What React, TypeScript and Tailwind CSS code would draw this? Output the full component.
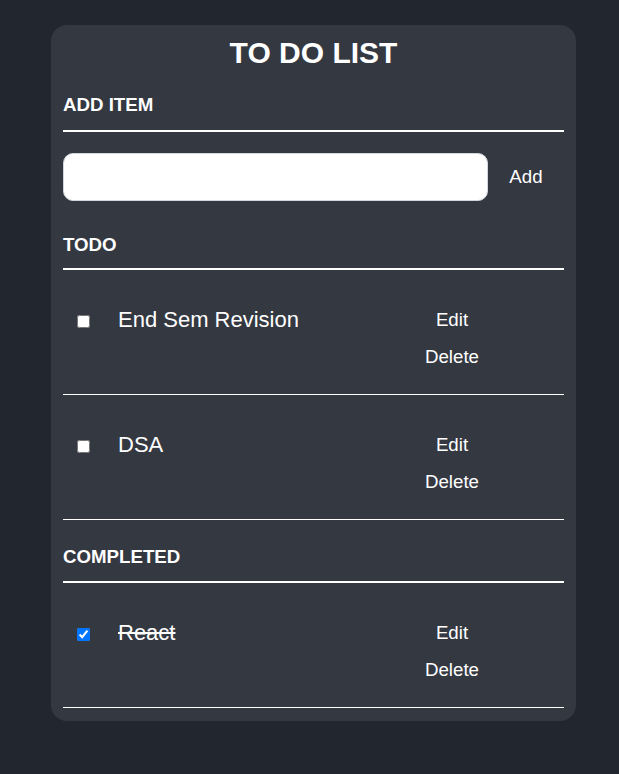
import React from "react";

interface TodoItemProps {
    text: string;
    done?: boolean;
}

function TodoItem({ text, done }: TodoItemProps) {
    return (
        <li className="flex items-start border-b border-white pt-[31px] pb-[19px]">
            <div className="flex flex-1 items-center h-[37px]">
                <input
                    type="checkbox"
                    defaultChecked={done}
                    className="ml-[14px] mt-[3px] h-[13px] w-[13px] accent-[#0075ff]"
                />
                <label className={"ml-[28px] text-[22px] leading-[37px] " + (done ? "line-through" : "")}>
                    {text}
                </label>
            </div>
            <div className="flex w-[100px] flex-col items-center mr-[62px]">
                <button className="h-[37px] text-[18.7px] leading-[37px]">Edit</button>
                <button className="h-[37px] text-[18.7px] leading-[37px]">Delete</button>
            </div>
        </li>
    );
}

function Heading({ title, className }: { title: string; className: string }) {
    return (
        <h3 className={"h-[24px] text-[18.7px] font-bold leading-[24px] " + className}>{title}</h3>
    );
}

export default function App() {
    return (
        <div className="min-h-[774px] bg-[#22272f] pt-[25px] font-['Liberation_Sans',Arial,sans-serif] text-white">
            <div className="ml-[51px] w-[525px] rounded-[16px] bg-[#343841] px-3 pt-[8px] pb-[13px]">
                <h1 className="h-[40px] text-center text-[30px] font-bold leading-[40px]">TO DO LIST</h1>

                <Heading title="ADD ITEM" className="mt-[20px]" />
                <div className="mt-[13px] h-[2px] bg-white" />
                <div className="mt-[21px] flex items-center">
                    <input
                        type="text"
                        className="h-[48px] w-[425px] rounded-[10px] border border-gray-300 bg-white px-3 text-black outline-none"
                    />
                    <button className="flex-1 text-center text-[18.7px]">Add</button>
                </div>

                <Heading title="TODO" className="mt-[32px]" />
                <div className="mt-[11px] h-[2px] bg-white" />
                <ul>
                    <TodoItem text="End Sem Revision" />
                    <TodoItem text="DSA" />
                </ul>

                <Heading title="COMPLETED" className="mt-[25px]" />
                <div className="mt-[12px] h-[2px] bg-white" />
                <ul>
                    <TodoItem text="React" done />
                </ul>
            </div>
        </div>
    );
}
